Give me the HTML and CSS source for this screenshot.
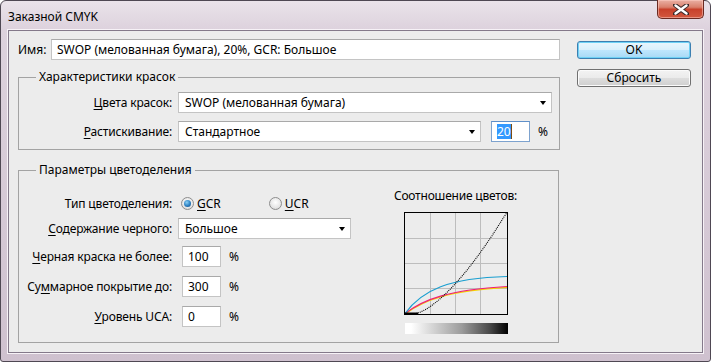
FILE: index.html
```html
<!DOCTYPE html>
<html lang="ru">
<head>
<meta charset="utf-8">
<title>Заказной CMYK</title>
<link rel="stylesheet" href="styles.css">
</head>
<body>
<div class="window">
  <div class="titlebar">
    <span class="title">Заказной CMYK</span>
    <div class="close">
      <svg width="16" height="11" viewBox="0 0 16 11"><path d="M2 1 L14 10 M14 1 L2 10" stroke="#3b2a2a" stroke-width="4.4" stroke-linecap="round" fill="none"/><path d="M2.5 1.5 L13.5 9.5 M13.5 1.5 L2.5 9.5" stroke="#fff" stroke-width="2.4" stroke-linecap="round" fill="none"/></svg>
    </div>
  </div>
  <div class="client">
    <div class="main">
      <div class="name-row">
        <span class="name-label">Имя:</span>
        <div class="field name-field">SWOP (мелованная бумага), 20%, GCR: Большое</div>
      </div>

      <div class="group group1">
        <span class="legend">Характеристики красок</span>
        <div class="row">
          <span class="label"><u>Ц</u>вета красок:</span>
          <div class="field select sel-wide">SWOP (мелованная бумага)<span class="arrow"></span></div>
        </div>
        <div class="row row2">
          <span class="label"><u>Р</u>астискивание:</span>
          <div class="field select sel-gain">Стандартное<span class="arrow"></span></div>
          <div class="field num focused"><span class="selected">20</span><span class="caret"></span></div>
          <span class="pct">%</span>
        </div>
      </div>

      <div class="group group2">
        <span class="legend">Параметры цветоделения</span>
        <div class="sep-form">
          <div class="row radio-row">
            <span class="label">Тип цветоделения:</span>
            <span class="radio checked"></span><span class="radio-text"><u>G</u>CR</span>
            <span class="radio ucr"></span><span class="radio-text"><u>U</u>CR</span>
          </div>
          <div class="row black-row">
            <span class="label"><u>С</u>одержание черного:</span>
            <div class="field select sel-black">Большое<span class="arrow"></span></div>
          </div>
          <div class="row inrow r1">
            <span class="label"><u>Ч</u>ерная краска не более:</span>
            <div class="field num">100</div>
            <span class="pct">%</span>
          </div>
          <div class="row inrow r2">
            <span class="label">Су<u>м</u>марное покрытие до:</span>
            <div class="field num">300</div>
            <span class="pct">%</span>
          </div>
          <div class="row inrow r3">
            <span class="label"><u>У</u>ровень UCA:</span>
            <div class="field num">0</div>
            <span class="pct">%</span>
          </div>
        </div>
        <div class="chart-col">
          <div class="chart-title">Соотношение цветов:</div>
          <svg class="chart" width="104" height="103" viewBox="0 0 104 103">
            <rect x="0" y="0" width="104" height="103" fill="#ececec"/>
            <g stroke="#bdbdbd" stroke-width="1">
              <path d="M26.5 0 V103 M51.5 0 V103 M76.5 0 V103"/>
              <path d="M0 26.5 H104 M0 51.5 H104 M0 76.5 H104"/>
            </g>
            <path d="M1 102 C 20 87.8, 45 78.8, 103 75.4" stroke="#f5d400" stroke-width="1.3" fill="none"/>
            <path d="M1 101.5 C 20 87, 45 78, 103 74.5" stroke="#ee1f79" stroke-width="1.2" fill="none"/>
            <path d="M1 101.5 C 18 78, 45 66, 103 64.5" stroke="#1a9fd0" stroke-width="1.2" fill="none"/>
            <path d="M1 101.5 H14" stroke="#000" stroke-width="2"/>
            <polyline points="10,102 16,100.3 22,97.3 28,93.3 34,88.6 40,83.3 46,77.4 52,71 58,64.2 64,56.9 70,49.1 76,41 82,32.5 88,23.7 94,14.4 100,4.9 103,0.5" stroke="#000" stroke-width="1.1" stroke-dasharray="1 1" fill="none"/>
            <rect x="0.5" y="0.5" width="103" height="102" fill="none" stroke="#000" stroke-width="1"/>
          </svg>
          <div class="ramp"></div>
        </div>
      </div>
    </div>
    <div class="buttons">
      <div class="btn default">OK</div>
      <div class="btn">Сбросить</div>
    </div>
  </div>
</div>
</body>
</html>
```

FILE: styles.css
```css
* { box-sizing: border-box; }
html, body { margin: 0; padding: 0; background: #ffffff; }
body {
  font-family: "Noto Sans", "Open Sans", sans-serif;
  font-size: 12px;
  color: #000;
}
u { text-decoration: underline; text-underline-offset: 2px; }

.window {
  width: 711px;
  height: 362px;
  border: 1px solid #4f4853;
  border-radius: 6px 6px 3px 3px;
  background: linear-gradient(#eae3ea 0, #ddd2dd 28px, #cfc1cf 100%);
  padding: 0 7px 8px 7px;
  display: flex;
  flex-direction: column;
}
.titlebar {
  height: 29px;
  display: flex;
  align-items: center;
}
.title {
  font-size: 12px;
  color: #000;
  padding-top: 1px;
}
.close {
  margin-left: auto;
  margin-right: -1px;
  align-self: flex-start;
  margin-top: -1px;
  width: 47px;
  height: 19px;
  border: 1px solid #6a2a22;
  border-top: none;
  border-radius: 0 0 5px 5px;
  background: linear-gradient(#eab0a4 0, #d9806c 40%, #c8412b 52%, #d2583f 100%);
  box-shadow: inset 0 0 0 1px rgba(255, 210, 200, 0.5);
  display: flex;
  align-items: center;
  justify-content: center;
}

.client {
  flex: 1;
  background: #ececec;
  border: 1px solid #84798a;
  box-shadow: 0 0 0 1px #f7f2f7;
  padding: 7px 0 0 9px;
  display: flex;
  gap: 17px;
}
.main {
  width: 542px;
  display: flex;
  flex-direction: column;
}

.field {
  background: #fff;
  border: 1px solid #c4c4c4;
  border-top-color: #a9a9a9;
  height: 21px;
  line-height: 19px;
  padding-left: 5px;
  white-space: nowrap;
  position: relative;
}
.name-row {
  display: flex;
  align-items: center;
  height: 22px;
  padding-top: 1px;
}
.name-label { width: 33px; }
.name-field { flex: 1; }

.group {
  border: 1px solid #a3a3a3;
  position: relative;
}
.legend {
  position: absolute;
  top: -9px;
  left: 17px;
  padding: 0 3px;
  background: #ececec;
  line-height: 16px;
}
.group1 {
  margin-top: 17px;
  padding: 14px 7px 7px 0;
}
.row {
  display: flex;
  align-items: center;
  height: 21px;
}
.row2 { margin-top: 8px; }
.label {
  width: 153px;
  text-align: right;
  flex: none;
  white-space: nowrap;
  letter-spacing: -0.15px;
}
.select { margin-left: 6px; padding-left: 6px; }
.sel-wide { flex: 1; }
.sel-gain { width: 303px; }
.sel-black { width: 173px; }
.arrow {
  position: absolute;
  right: 5px;
  top: 8px;
  width: 0;
  height: 0;
  border-left: 3.5px solid transparent;
  border-right: 3.5px solid transparent;
  border-top: 4px solid #000;
}
.num { width: 39px; margin-left: 10px; }
.pct { margin-left: 8px; }
.focused { border-color: #7da2ce; border-top-color: #5f8fc8; display: flex; align-items: center; }
.selected { background: #3399ff; color: #fff; line-height: 15px; }
.caret { width: 1px; height: 15px; background: #7a4b12; }

.group2 {
  margin-top: 20px;
  width: 541px;
  height: 173px;
  display: flex;
  padding: 22px 0 0 0;
}
.sep-form { width: 371px; }
.radio {
  width: 13px;
  height: 13px;
  border-radius: 50%;
  border: 1px solid #8d8d8d;
  background: radial-gradient(circle at 50% 40%, #ffffff 0, #e6e6e6 60%, #cfcfcf 100%);
  margin-left: 9px;
  position: relative;
  flex: none;
}
.radio.checked::after {
  content: "";
  position: absolute;
  left: 2px;
  top: 2px;
  width: 7px;
  height: 7px;
  border-radius: 50%;
  background: radial-gradient(circle at 40% 35%, #8ad0f5 0, #2b7fc2 55%, #174a7a 100%);
}
.radio.ucr { margin-left: 48px; }
.radio-text { margin-left: 3px; }
.black-row { margin-top: 4px; }
.r1 { margin-top: 7px; }
.r2 { margin-top: 9px; }
.r3 { margin-top: 9px; }

.chart-col {
  width: 131px;
  display: flex;
  flex-direction: column;
  align-items: center;
  margin-top: -5px;
}
.chart-title { line-height: 16px; white-space: nowrap; letter-spacing: -0.2px; }
.chart { display: block; margin-top: 8px; margin-left: 1px; }
.ramp {
  width: 103px;
  height: 11px;
  margin-top: 8px;
  margin-left: 1px;
  background: linear-gradient(to right, #ffffff 0, #ffffff 6%, #d8d8d8 25%, #9c9c9c 55%, #4a4a4a 82%, #000000 100%);
}

.buttons {
  width: 114px;
  padding-top: 3px;
  display: flex;
  flex-direction: column;
  gap: 10px;
}
.btn {
  height: 18px;
  border: 1px solid #707070;
  border-radius: 3px;
  background: linear-gradient(#f3f3f3 0, #ebebeb 48%, #dddddd 52%, #cfcfcf 100%);
  box-shadow: inset 0 0 0 1px #fbfbfb;
  text-align: center;
  line-height: 15px;
}
.btn.default {
  border-color: #3c7fb1;
  background: linear-gradient(#eaf6fd 0, #d9f0fc 48%, #bee6fd 52%, #a7d9f5 100%);
  box-shadow: inset 0 0 0 1px #6ed1f5;
}
```
